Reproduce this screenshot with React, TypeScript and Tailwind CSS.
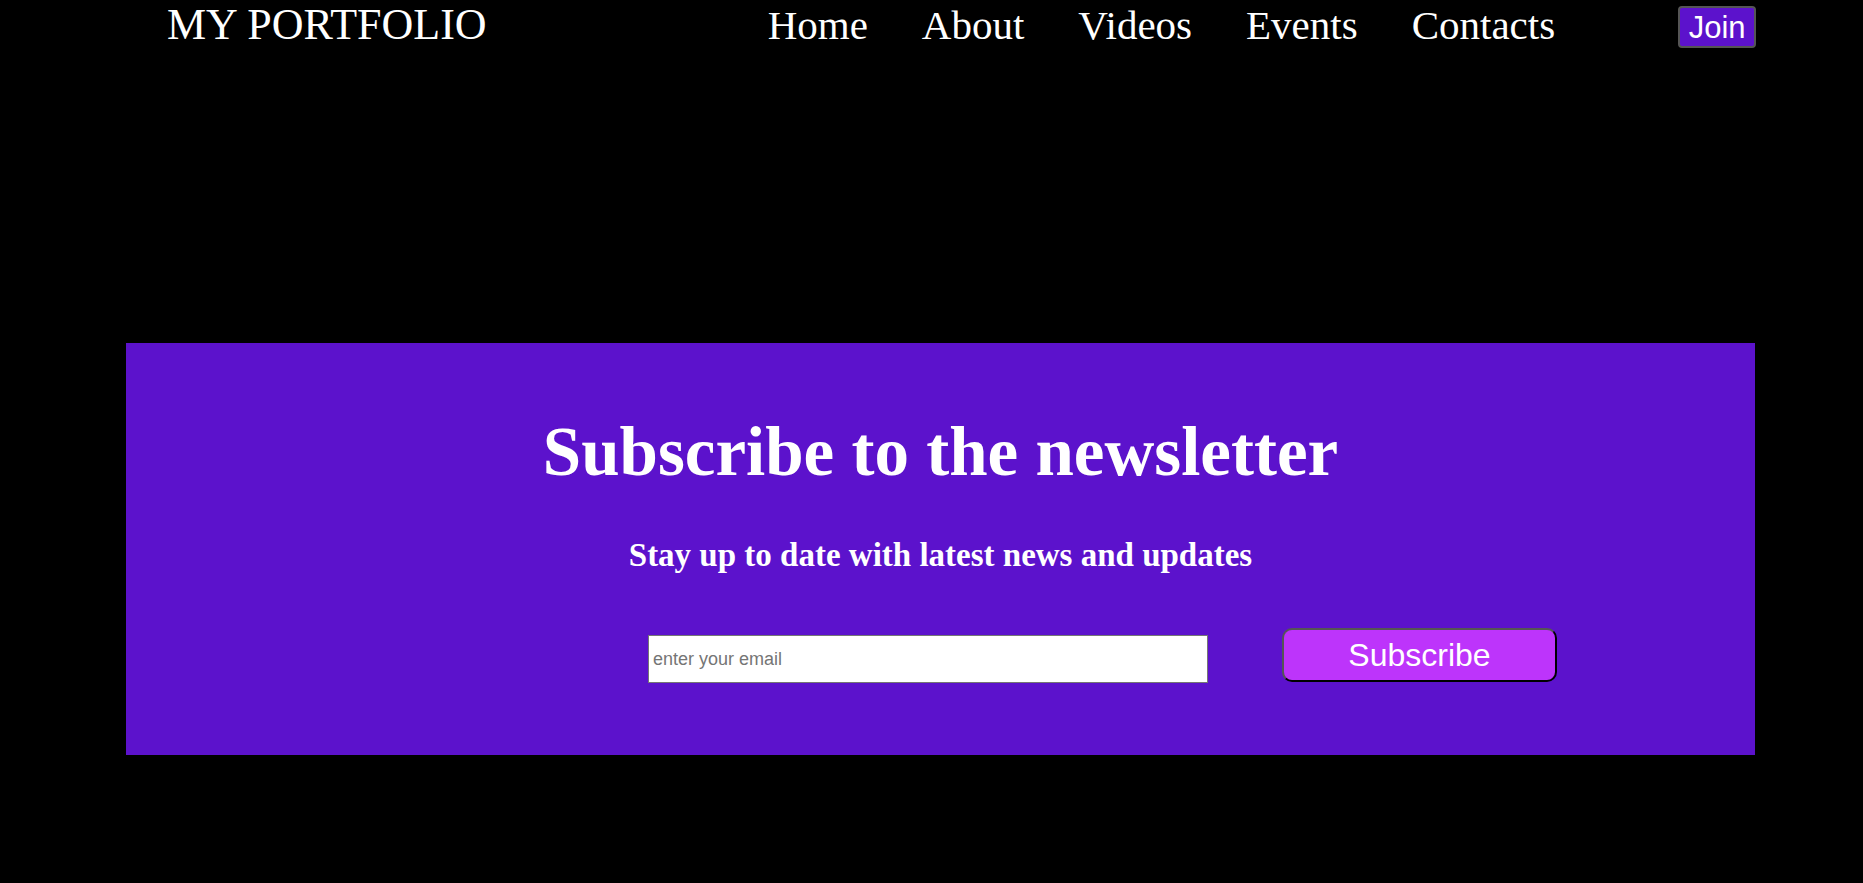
import React from "react";

const links = ["Home", "About", "Videos", "Events", "Contacts"];

const App: React.FC = () => {
  return (
    <div className="min-h-[883px] bg-black text-white font-['Liberation_Serif','Times_New_Roman',serif]">
      <header className="flex items-start h-[52px]">
        <h1 className="ml-[167px] mt-[1px] text-[44px] leading-[48px] font-normal whitespace-nowrap">
          MY PORTFOLIO
        </h1>
        <nav className="ml-[281px] flex gap-[54px] mt-[2px]">
          {links.map((link) => (
            <a key={link} href="#" className="text-[41px] leading-[46px]">
              {link}
            </a>
          ))}
        </nav>
        <button className="ml-[123px] mt-[6px] w-[78px] h-[42px] bg-[#5c12cc] border-2 border-[#555] rounded-[4px] text-[31px] leading-none text-white font-['Liberation_Sans',Arial,sans-serif]">
          Join
        </button>
      </header>

      <section className="mt-[291px] ml-[126px] w-[1629px] h-[412px] bg-[#5c12cc] flex flex-col">
        <h2 className="mt-[75px] text-center text-[69px] leading-none font-bold">
          Subscribe to the newsletter
        </h2>
        <p className="mt-[52px] text-center text-[33px] leading-none font-bold">
          Stay up to date with latest news and updates
        </p>
        <form className="mt-[56px] flex items-start pl-[522px] gap-[74px] font-['Liberation_Sans',Arial,sans-serif]">
          <input
            type="email"
            placeholder="enter your email"
            className="mt-[7px] w-[560px] h-[48px] bg-white border border-[#767676] px-[4px] text-[18px] text-black placeholder:text-[#757575] outline-none"
          />
          <button
            type="button"
            className="w-[275px] h-[54px] bg-[#bd34fb] border-2 border-t-[#555] border-l-[#555] border-b-black border-r-black rounded-[10px] text-[32px] leading-none text-white"
          >
            Subscribe
          </button>
        </form>
      </section>
    </div>
  );
};

export default App;
